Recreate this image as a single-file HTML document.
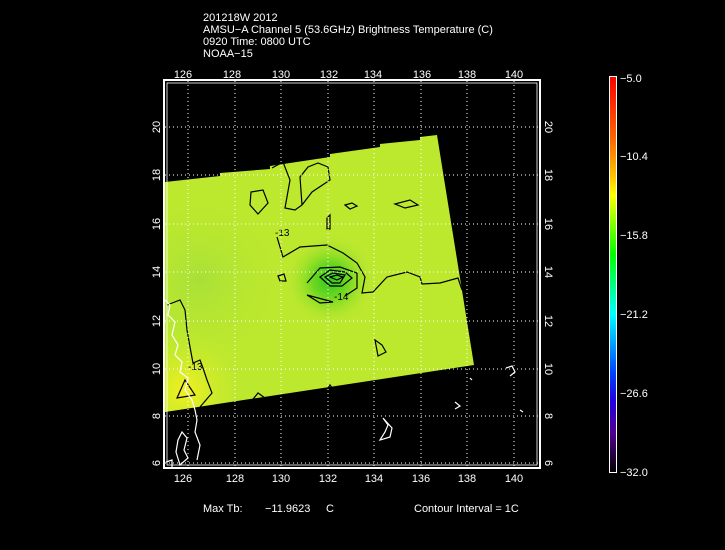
<!DOCTYPE html>
<html><head><style>
body{margin:0;background:#000;width:725px;height:550px;overflow:hidden;font-family:"Liberation Sans",sans-serif;}
</style></head><body>
<svg width="725" height="550" xmlns="http://www.w3.org/2000/svg" style="position:absolute;left:0;top:0">
<defs>
<clipPath id="sw"><path d="M165,412 L474,365 L437,135 L420,137 L420,140 L380,144 L380,147 L330,154 L330,157 L270,166 L270,169 L220,173 L220,176 L165,182 Z"/></clipPath>
<radialGradient id="g1" cx="330" cy="280" r="45" gradientUnits="userSpaceOnUse"><stop offset="0" stop-color="#30c820"/><stop offset="0.4" stop-color="#70d820"/><stop offset="1" stop-color="#b8e830" stop-opacity="0"/></radialGradient>
<radialGradient id="g2" cx="185" cy="390" r="60" gradientUnits="userSpaceOnUse"><stop offset="0" stop-color="#f4f020"/><stop offset="1" stop-color="#c8ec2c" stop-opacity="0"/></radialGradient>
<radialGradient id="g3" cx="200" cy="280" r="80" gradientUnits="userSpaceOnUse"><stop offset="0" stop-color="#a8e038"/><stop offset="1" stop-color="#b8e830" stop-opacity="0"/></radialGradient>
<linearGradient id="cb" x1="0" y1="0" x2="0" y2="1"><stop offset="0" stop-color="#ff0000"/><stop offset="0.15" stop-color="#ff6000"/><stop offset="0.25" stop-color="#ffc000"/><stop offset="0.3" stop-color="#ffff00"/><stop offset="0.45" stop-color="#00ff00"/><stop offset="0.6" stop-color="#00ffff"/><stop offset="0.75" stop-color="#0040ff"/><stop offset="0.82" stop-color="#2000e0"/><stop offset="0.9" stop-color="#500090"/><stop offset="1" stop-color="#000000"/></linearGradient>
</defs>
<g clip-path="url(#sw)">
<rect x="160" y="130" width="320" height="290" fill="#bce82e"/>
<rect x="160" y="130" width="320" height="290" fill="url(#g3)"/>
<rect x="160" y="130" width="320" height="290" fill="url(#g2)"/>
<rect x="160" y="130" width="320" height="290" fill="url(#g1)"/>
</g>
<g fill="none" stroke="#000" stroke-width="1.2">
<path d="M277,237 L283,257 L300,247 L327,245 L343,253 L357,263 L365,277 L362,293 L373,292 L387,277 L407,272 L420,277 L422,284 L440,283 L458,278 L462,290"/>
<path d="M272,168 L283,162 L290,180 L285,208 L295,210 L302,205 L300,177 L308,167 L318,163 L328,167 L330,180 L312,192 L302,205"/>
<path d="M307,283 L320,268 L340,267 L357,273 L357,288 L345,296 M333,302 L320,303 L307,295 Z"/>
<path d="M320,277 L330,270 L345,272 L352,278 L342,286 L330,286 Z"/>
<path d="M325,277 L333,273 L345,275 L340,283 L332,283 Z"/>
<path d="M330,277 L337,275 L343,277 L337,280 Z"/>
<path d="M251,192 L263,190 L268,203 L258,214 L250,205 Z"/>
<path d="M345,205 L352,203 L357,206 L350,209 Z"/>
<path d="M395,204 L410,200 L418,205 L405,208 Z"/>
<path d="M327,218 L330,215 L330,229 L327,229 Z"/>
<path d="M278,276 L284,274 L286,281 L280,281 Z"/>
<path d="M167,305 L180,300 L185,310 L187,330 L190,347 L193,363 L200,360 L203,368 L207,380 L212,393 L200,407"/>
<path d="M177,398 L185,380 L195,395 Z"/>
<path d="M250,403 L258,393 L265,398"/>
<path d="M325,393 L330,385 L335,392"/>
<path d="M375,340 L382,345 L386,352 L378,356 Z"/>
</g>
<g font-size="10" fill="#000"><text x="275" y="236">-13</text><text x="334" y="300">-14</text><text x="188" y="370">-13</text></g>
<g fill="none" stroke="#fff" stroke-width="1.2">
<path d="M165,300 L170,305 L168,315 L175,322 L172,335 L178,345 L175,355 L182,362 L180,372 L188,378 L185,390 L192,400 L195,410 L197,420 L195,432 L200,445 L197,460"/>
<path d="M182,432 L187,438 L184,450 L188,458 L180,465 L176,452 L178,440 Z"/>
<path d="M166,462 L172,460 L172,468"/>
<path d="M383,418 L388,425 L385,432 L380,440 L390,437 L392,428 Z"/>
<path d="M455,402 L460,406 L455,409"/>
<path d="M506,368 L512,366 L515,372 L510,376"/>
<path d="M470,378 L472,380"/>
<path d="M520,410 L523,412"/>
</g>
<g stroke="#fff" stroke-width="1" stroke-dasharray="1,3" fill="none">
<path d="M188,81V467M235,81V467M281,81V467M328,81V467M374,81V467M421,81V467M467,81V467M514,81V467"/>
<path d="M165,127H540M165,175H540M165,224H540M165,272H540M165,321H540M165,369H540M165,416H540M165,463H540"/>
</g>
<rect x="164" y="80" width="376" height="388" fill="none" stroke="#fff" stroke-width="2"/>
<rect x="167" y="83" width="370" height="382" fill="none" stroke="#fff" stroke-width="0.8"/>
<g fill="#fff" font-size="11" text-anchor="middle">
<text x="183" y="78">126</text><text x="232" y="78">128</text><text x="281" y="78">130</text><text x="329" y="78">132</text><text x="373" y="78">134</text><text x="422" y="78">136</text><text x="467" y="78">138</text><text x="514" y="78">140</text>
<text x="183" y="482">126</text><text x="235" y="482">128</text><text x="281" y="482">130</text><text x="328" y="482">132</text><text x="374" y="482">134</text><text x="421" y="482">136</text><text x="467" y="482">138</text><text x="514" y="482">140</text>
</g>
<g fill="#fff" font-size="11" text-anchor="middle">
<text transform="translate(160,127) rotate(-90)">20</text><text transform="translate(160,175) rotate(-90)">18</text><text transform="translate(160,224) rotate(-90)">16</text><text transform="translate(160,272) rotate(-90)">14</text><text transform="translate(160,321) rotate(-90)">12</text><text transform="translate(160,369) rotate(-90)">10</text><text transform="translate(160,416) rotate(-90)">8</text><text transform="translate(160,463) rotate(-90)">6</text>
<text transform="translate(545,127) rotate(90)">20</text><text transform="translate(545,175) rotate(90)">18</text><text transform="translate(545,224) rotate(90)">16</text><text transform="translate(545,272) rotate(90)">14</text><text transform="translate(545,321) rotate(90)">12</text><text transform="translate(545,369) rotate(90)">10</text><text transform="translate(545,416) rotate(90)">8</text><text transform="translate(545,463) rotate(90)">6</text>
</g>
<rect x="609.5" y="76.5" width="7" height="396" fill="url(#cb)" stroke="#fff" stroke-width="1"/>
<g fill="#fff" font-size="11">
<text x="620" y="82">−5.0</text><text x="620" y="160">−10.4</text><text x="620" y="239">−15.8</text><text x="620" y="318">−21.2</text><text x="620" y="397">−26.6</text><text x="620" y="476">−32.0</text>
</g>
<g fill="#fff" font-size="11">
<text x="203" y="21">201218W 2012</text>
<text x="203" y="33">AMSU−A Channel 5 (53.6GHz) Brightness Temperature (C)</text>
<text x="203" y="45">0920 Time: 0800 UTC</text>
<text x="203" y="57">NOAA−15</text>
<text x="203" y="512">Max Tb:</text><text x="265" y="512">−11.9623</text><text x="326" y="512">C</text>
<text x="414" y="512">Contour Interval = 1C</text>
</g>
</svg>
</body></html>
